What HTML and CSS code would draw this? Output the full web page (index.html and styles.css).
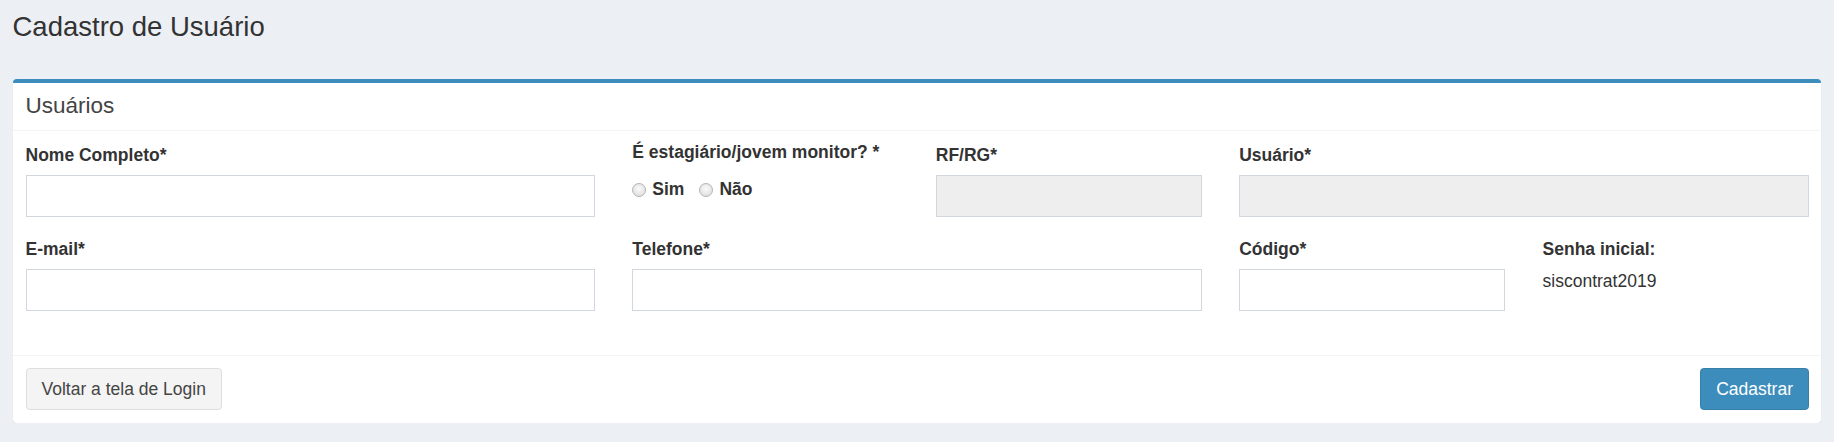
FILE: index.html
```html
<!DOCTYPE html>
<html lang="pt-BR">
<head>
<meta charset="utf-8">
<title>Cadastro de Usuário</title>
<link rel="stylesheet" href="styles.css">
</head>
<body>
<section class="content-header">
  <h1 class="page-title">Cadastro de Usuário</h1>
</section>
<section class="content">
  <div class="box">
    <div class="box-header">
      <h3 class="box-title">Usuários</h3>
    </div>
    <form class="box-body">
      <div class="field span4">
        <label class="lbl">Nome Completo*</label>
        <input class="ctl" type="text">
      </div>
      <div class="field span2">
        <label class="lbl lbl-up">É estagiário/jovem monitor? *</label>
        <div class="radios">
          <label class="radio"><input type="radio" name="est"><span>Sim</span></label>
          <label class="radio"><input type="radio" name="est"><span>Não</span></label>
        </div>
      </div>
      <div class="field span2">
        <label class="lbl">RF/RG*</label>
        <input class="ctl" type="text" disabled>
      </div>
      <div class="field span4">
        <label class="lbl">Usuário*</label>
        <input class="ctl" type="text" disabled>
      </div>

      <div class="field span4">
        <label class="lbl">E-mail*</label>
        <input class="ctl" type="text">
      </div>
      <div class="field span4">
        <label class="lbl">Telefone*</label>
        <input class="ctl" type="text">
      </div>
      <div class="field span2">
        <label class="lbl">Código*</label>
        <input class="ctl" type="text">
      </div>
      <div class="field span2">
        <label class="lbl">Senha inicial:</label>
        <p class="static">siscontrat2019</p>
      </div>
    </form>
    <div class="box-footer">
      <button class="btn btn-default" type="button">Voltar a tela de Login</button>
      <button class="btn btn-primary" type="button">Cadastrar</button>
    </div>
  </div>
</section>
</body>
</html>
```

FILE: styles.css
```css
* { box-sizing: border-box; }

html, body {
  margin: 0;
  padding: 0;
}

body {
  background: #ecf0f5;
  font-family: "Liberation Sans", Arial, Helvetica, sans-serif;
  font-size: 17.5px;
  line-height: 25px;
  color: #333;
}

.content-header {
  padding: 12px 12.5px 0;
}

.page-title {
  margin: 0;
  font-size: 27.5px;
  line-height: 30.25px;
  font-weight: 400;
  color: #333;
}

.content {
  padding: 36.75px 13px 0;
}

.box {
  background: #fff;
  border-top: 4px solid #3c8dbc;
  border-radius: 3.75px;
  box-shadow: 0 1px 1px rgba(0, 0, 0, 0.1);
}

.box-header {
  padding: 11px 12.5px;
  border-bottom: 1px solid #f4f4f4;
}

.box-title {
  margin: 0;
  font-size: 22.5px;
  line-height: 24.75px;
  font-weight: 400;
  color: #444;
}

.box-body {
  display: grid;
  grid-template-columns: repeat(12, 1fr);
  column-gap: 37.5px;
  row-gap: 20.5px;
  padding: 12.5px 12.5px 44px;
}

.field {
  display: flex;
  flex-direction: column;
  min-width: 0;
}

.span4 { grid-column: span 4; }
.span2 { grid-column: span 2; }

.lbl {
  display: block;
  font-weight: 700;
  margin-bottom: 6.5px;
  color: #333;
  white-space: nowrap;
}

.lbl-up {
  margin-top: -3px;
  margin-bottom: 12px;
}

.ctl {
  display: block;
  width: 100%;
  height: 42px;
  padding: 7.5px 15px;
  font: inherit;
  color: #555;
  background: #fff;
  border: 1px solid #d2d6de;
  border-radius: 0;
  outline: none;
}

.ctl:disabled {
  background: #eee;
}

.radios {
  display: flex;
  align-items: center;
  gap: 15px;
}

.radio {
  display: flex;
  align-items: center;
  gap: 6px;
  font-weight: 700;
  color: #333;
}

.radio input {
  -webkit-appearance: none;
  appearance: none;
  margin: 0;
  width: 14px;
  height: 14px;
  border-radius: 50%;
  border: 1px solid #b4b4b4;
  background: radial-gradient(circle at 50% 40%, #fafafa 0%, #e6e6e6 60%, #d8d8d8 100%);
}

.static {
  margin: 0;
  color: #333;
}

.box-footer {
  display: flex;
  justify-content: space-between;
  align-items: center;
  padding: 12.5px 12px 12.5px 12.5px;
  border-top: 1px solid #f4f4f4;
}

.btn {
  height: 42px;
  padding: 7.5px 15px;
  font: inherit;
  line-height: 25px;
  border-radius: 3.75px;
  border: 1px solid transparent;
  cursor: pointer;
}

.btn-default {
  background: #f4f4f4;
  border-color: #ddd;
  color: #444;
}

.btn-primary {
  background: #3c8dbc;
  border-color: #367fa9;
  color: #fff;
}
```
